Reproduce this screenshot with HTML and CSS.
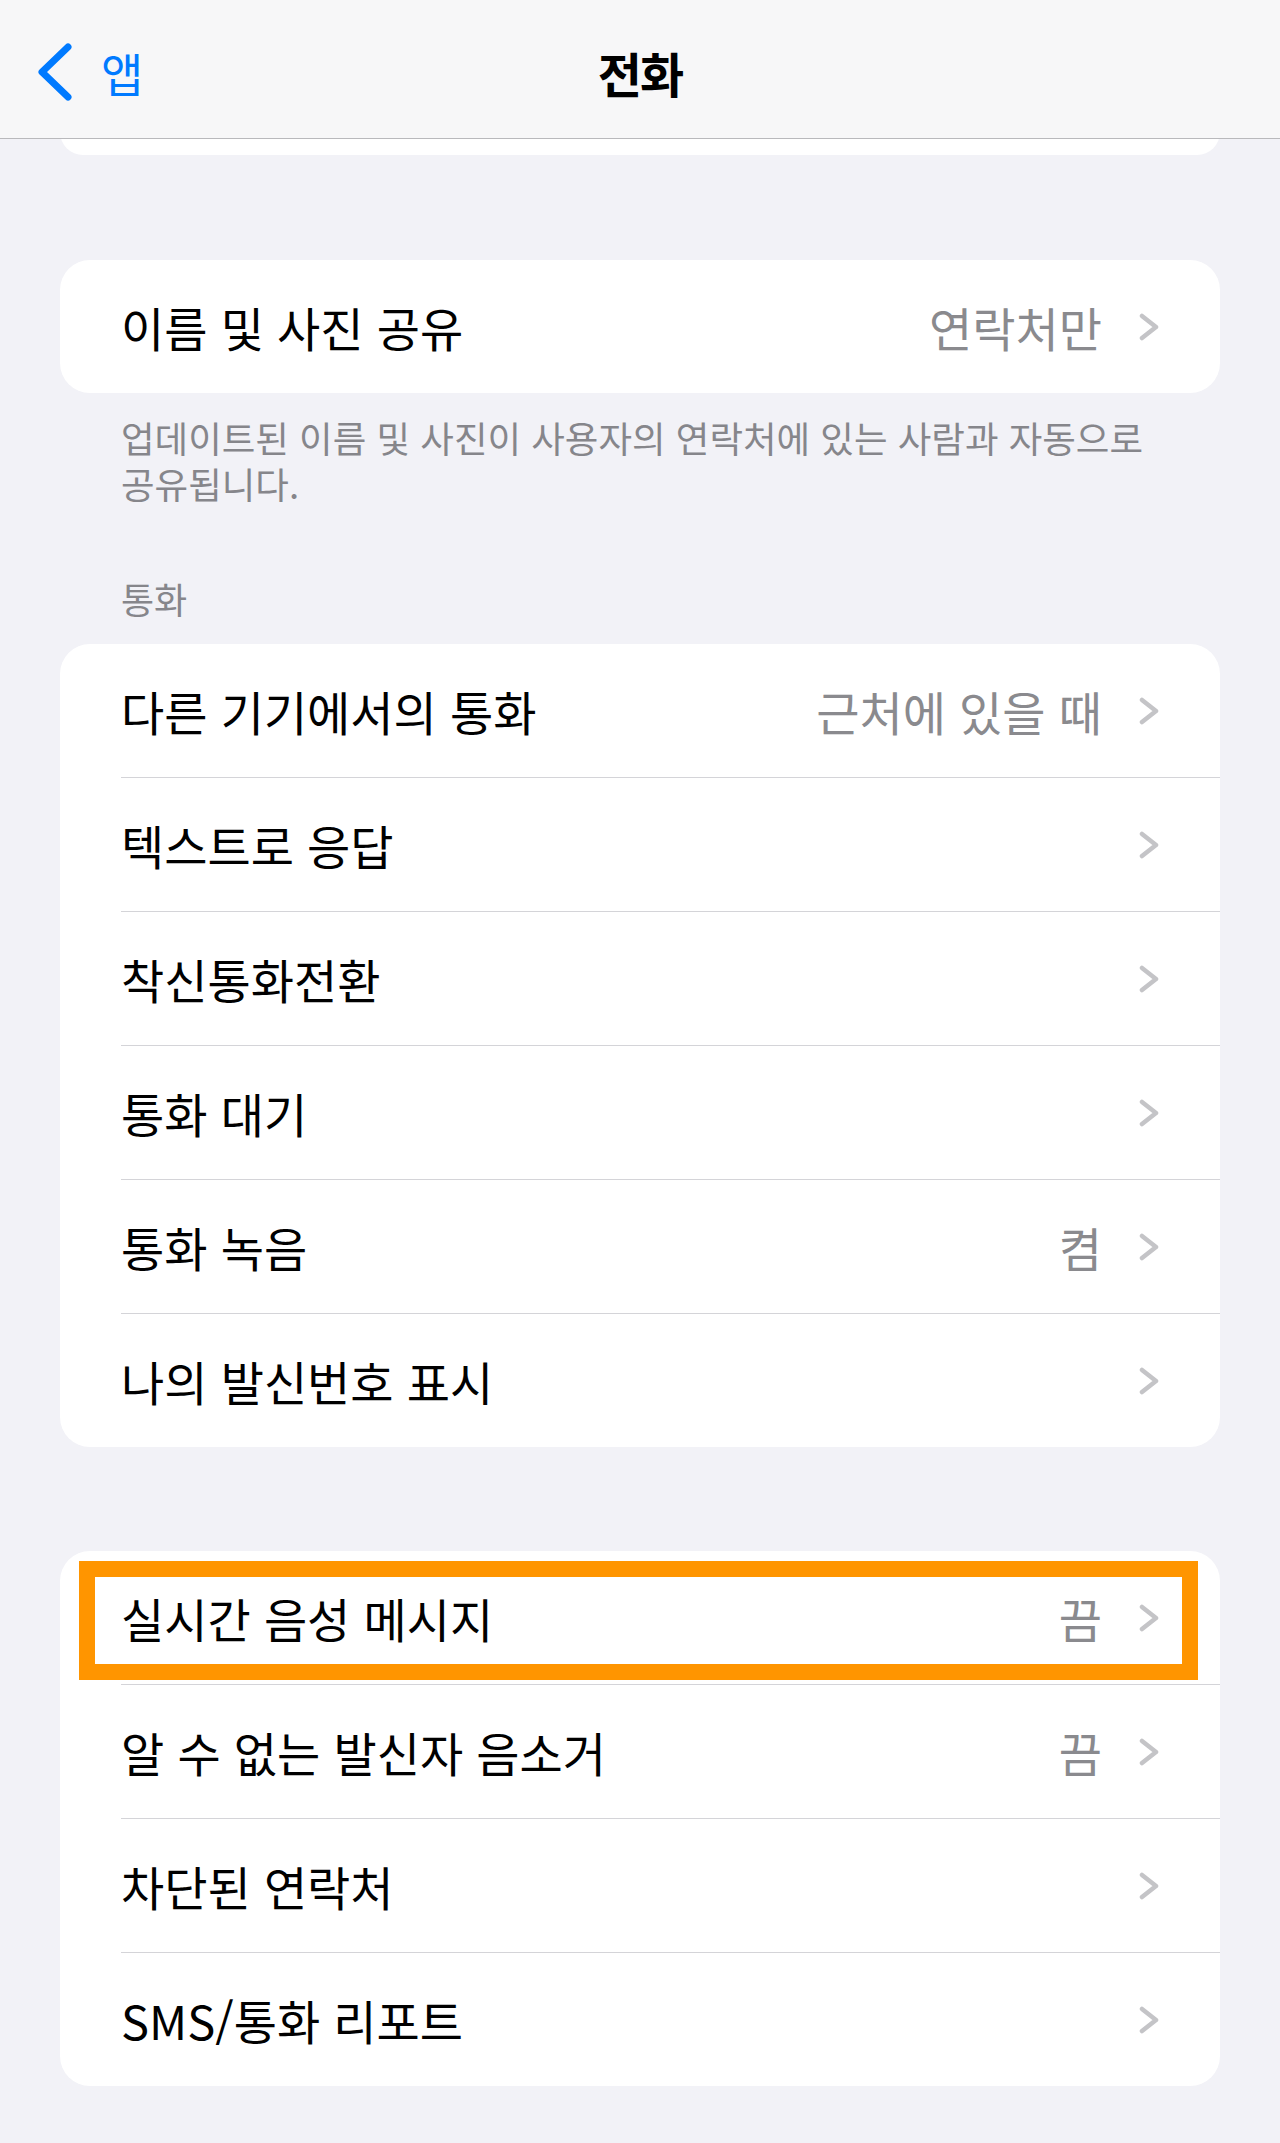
FILE: index.html
```html
<!DOCTYPE html>
<html lang="ko">
  <head>
    <meta charset="UTF-8" />
    <meta name="viewport" content="width=device-width, initial-scale=1.0" />
    <title>전화</title>
    <link rel="stylesheet" href="styles.css">
  </head>
  <body>
    <!-- 상단 내비게이션 -->
    <header class="nav">
      <a class="nav-back" href="#">
        <svg class="back-icon" width="40" height="60" viewBox="0 0 40 60">
          <path d="M33 5 L7 30 L33 55" fill="none" stroke="#007aff" stroke-width="7" stroke-linecap="round" stroke-linejoin="round" />
        </svg>
        <span>앱</span>
      </a>
      <h1 class="nav-title">전화</h1>
      <div></div>
    </header>

    <div class="card card-stub"></div>

    <!-- 이름 및 사진 공유 -->
    <section class="card card-first">
      <div class="row">
        <span class="label">이름 및 사진 공유</span>
        <span class="value">연락처만</span>
        <svg class="chevron" width="20" height="28" viewBox="0 0 20 28"><path d="M3 3 L17 14 L3 25" /></svg>
      </div>
    </section>
    <p class="note">업데이트된 이름 및 사진이 사용자의 연락처에 있는 사람과 자동으로 공유됩니다.</p>

    <!-- 통화 -->
    <h2 class="section-title">통화</h2>
    <section class="card">
      <div class="row">
        <span class="label">다른 기기에서의 통화</span>
        <span class="value">근처에 있을 때</span>
        <svg class="chevron" width="20" height="28" viewBox="0 0 20 28"><path d="M3 3 L17 14 L3 25" /></svg>
      </div>
      <div class="row">
        <span class="label">텍스트로 응답</span>
        <svg class="chevron" width="20" height="28" viewBox="0 0 20 28"><path d="M3 3 L17 14 L3 25" /></svg>
      </div>
      <div class="row">
        <span class="label">착신통화전환</span>
        <svg class="chevron" width="20" height="28" viewBox="0 0 20 28"><path d="M3 3 L17 14 L3 25" /></svg>
      </div>
      <div class="row">
        <span class="label">통화 대기</span>
        <svg class="chevron" width="20" height="28" viewBox="0 0 20 28"><path d="M3 3 L17 14 L3 25" /></svg>
      </div>
      <div class="row">
        <span class="label">통화 녹음</span>
        <span class="value">켬</span>
        <svg class="chevron" width="20" height="28" viewBox="0 0 20 28"><path d="M3 3 L17 14 L3 25" /></svg>
      </div>
      <div class="row">
        <span class="label">나의 발신번호 표시</span>
        <svg class="chevron" width="20" height="28" viewBox="0 0 20 28"><path d="M3 3 L17 14 L3 25" /></svg>
      </div>
    </section>

    <!-- 음성 메시지 / 차단 -->
    <section class="card card-last">
      <div class="highlight"></div>
      <div class="row">
        <span class="label">실시간 음성 메시지</span>
        <span class="value">끔</span>
        <svg class="chevron" width="20" height="28" viewBox="0 0 20 28"><path d="M3 3 L17 14 L3 25" /></svg>
      </div>
      <div class="row">
        <span class="label">알 수 없는 발신자 음소거</span>
        <span class="value">끔</span>
        <svg class="chevron" width="20" height="28" viewBox="0 0 20 28"><path d="M3 3 L17 14 L3 25" /></svg>
      </div>
      <div class="row">
        <span class="label">차단된 연락처</span>
        <svg class="chevron" width="20" height="28" viewBox="0 0 20 28"><path d="M3 3 L17 14 L3 25" /></svg>
      </div>
      <div class="row">
        <span class="label">SMS/통화 리포트</span>
        <svg class="chevron" width="20" height="28" viewBox="0 0 20 28"><path d="M3 3 L17 14 L3 25" /></svg>
      </div>
    </section>
  </body>
</html>
```

FILE: styles.css
```css
body {
  margin: 0;
  background-color: #f2f2f7;
  font-family: "Noto Sans CJK KR", "Noto Sans", sans-serif;
  color: #000;
}
.nav {
  position: relative;
  z-index: 1;
  display: grid;
  grid-template-columns: 1fr auto 1fr;
  align-items: center;
  height: 139px;
  padding-top: 6px;
  box-sizing: border-box;
  background-color: #f7f7f8;
  border-bottom: 1px solid #b9b9bc;
}
.nav-back {
  display: flex;
  align-items: center;
  gap: 26px;
  padding-left: 35px;
  color: #007aff;
  text-decoration: none;
  font-size: 46px;
  line-height: 1;
}
.back-icon {
  display: block;
}
.nav-title {
  margin: 0;
  font-size: 48px;
  font-weight: 700;
  letter-spacing: -2px;
  line-height: 1;
}
.card {
  margin: 0 60px;
  background-color: #fff;
  border-radius: 30px;
  overflow: hidden;
}
.card-stub {
  height: 46px;
  margin-top: -30px;
}
.card-first {
  margin-top: 105px;
}
.card-last {
  position: relative;
  margin-top: 104px;
}
.row {
  display: flex;
  align-items: center;
  height: 133px;
  margin-left: 61px;
  padding-right: 61px;
  font-size: 47px;
}
.row + .row {
  border-top: 1px solid #d4d4d8;
}
.label {
  flex: 1;
}
.value {
  margin-right: 37px;
  color: #8a8a8e;
}
.chevron {
  display: block;
  fill: none;
  stroke: #c4c4c7;
  stroke-width: 4.5;
  stroke-linecap: round;
  stroke-linejoin: round;
}
.note {
  margin: 0;
  padding: 22px 80px 0 121px;
  font-size: 36.5px;
  line-height: 46px;
  color: #86868b;
  word-break: keep-all;
}
.section-title {
  margin: 68px 0 23px;
  padding-left: 121px;
  font-size: 36px;
  line-height: 46px;
  font-weight: 400;
  color: #86868b;
}
.highlight {
  position: absolute;
  top: 10px;
  left: 19px;
  right: 22px;
  height: 119px;
  box-sizing: border-box;
  border: 16px solid #ff9500;
  pointer-events: none;
}
```
